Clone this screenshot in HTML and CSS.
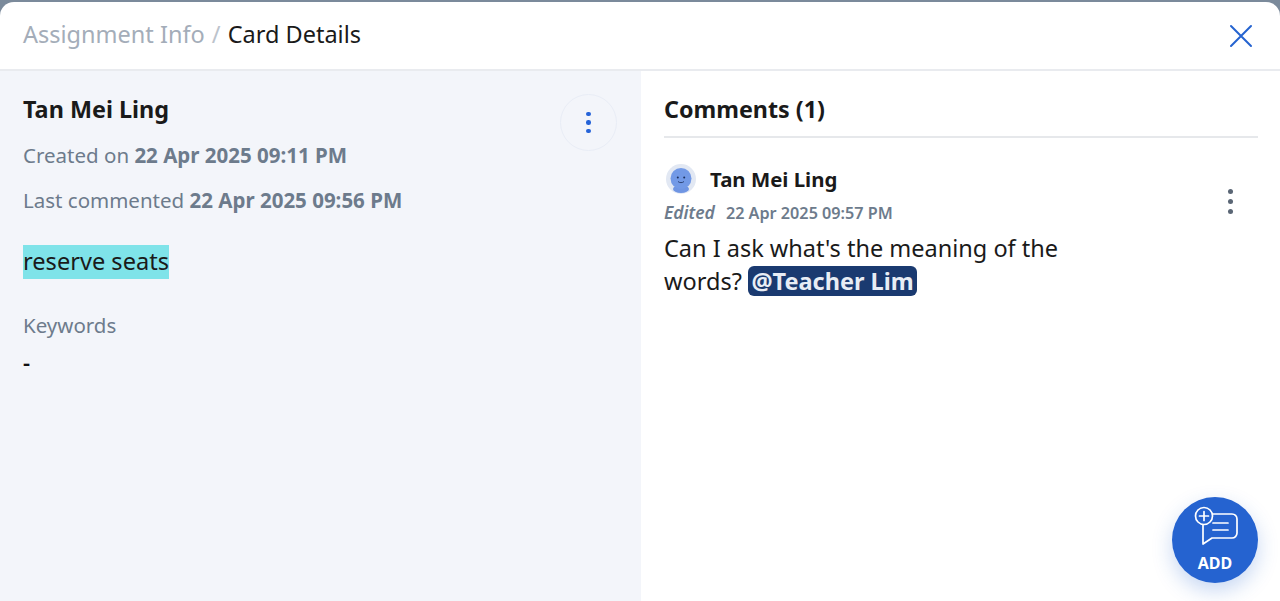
FILE: index.html
```html
<!DOCTYPE html>
<html lang="en">
<head>
    <meta charset="UTF-8">
    <meta name="viewport" content="width=device-width, initial-scale=1.0">
    <title>Card Details</title>
    <link rel="stylesheet" href="styles.css">
</head>
<body>
    <div class="modal">
        <header class="modal-header">
            <div class="crumbs">
                <span class="crumb-parent">Assignment Info</span>
                <span class="crumb-sep">/</span>
                <span class="crumb-current">Card Details</span>
            </div>
            <svg class="close-icon" width="24" height="24" viewBox="0 0 24 24" fill="none" stroke="#2563d0" stroke-width="2" stroke-linecap="round">
                <path d="M2 2L22 22M22 2L2 22"/>
            </svg>
        </header>
        <div class="modal-body">
            <section class="card-panel">
                <div class="card-top">
                    <div>
                        <h2 class="card-name">Tan Mei Ling</h2>
                        <p class="meta">Created on <b>22 Apr 2025 09:11 PM</b></p>
                        <p class="meta meta-last">Last commented <b>22 Apr 2025 09:56 PM</b></p>
                    </div>
                    <div class="round-menu">
                        <span class="dot"></span>
                        <span class="dot"></span>
                        <span class="dot"></span>
                    </div>
                </div>
                <div class="quote"><span class="highlight">reserve seats</span></div>
                <p class="keywords-label">Keywords</p>
                <p class="keywords-value">-</p>
            </section>
            <section class="comments-panel">
                <h2 class="comments-title">Comments (1)</h2>
                <div class="comment">
                    <div class="comment-main">
                        <div class="comment-user">
                            <svg class="avatar" width="30" height="30" viewBox="0 0 30 30">
                                <circle cx="15" cy="15" r="15" fill="#e2e8f3"/>
                                <ellipse cx="15" cy="25" rx="8" ry="4" fill="#6f95e3"/>
                                <circle cx="15" cy="14.500" r="10.500" fill="#7299e6"/>
                                <circle cx="11.800" cy="13.500" r="1" fill="#1c2f5c"/>
                                <circle cx="18.200" cy="13.500" r="1" fill="#1c2f5c"/>
                                <path d="M12 17.500C13.500 19 16.500 19 18 17.500" fill="none" stroke="#1c2f5c" stroke-width="0.800"/>
                            </svg>
                            <span class="user-name">Tan Mei Ling</span>
                        </div>
                        <div class="comment-meta"><i>Edited</i><b>22 Apr 2025 09:57 PM</b></div>
                        <p class="comment-text">Can I ask what's the meaning of the<br>words? <span class="mention">@Teacher Lim</span></p>
                    </div>
                    <div class="comment-menu">
                        <span class="dot dot-grey"></span>
                        <span class="dot dot-grey"></span>
                        <span class="dot dot-grey"></span>
                    </div>
                </div>
                <div class="add-btn">
                    <svg width="46" height="42" viewBox="-1 0 46 42" fill="none" stroke="#fff" stroke-width="1.700" stroke-linecap="round" stroke-linejoin="round">
                        <path d="M20 9H39A5 5 0 0 1 44 14V28A5 5 0 0 1 39 33H19L10 39V20"/>
                        <circle cx="11" cy="11" r="8.500"/>
                        <path d="M11 6.500V15.500M6.500 11H15.500"/>
                        <path d="M20 18H35M20 25H35"/>
                    </svg>
                    <span class="add-label">ADD</span>
                </div>
            </section>
        </div>
    </div>
</body>
</html>
```

FILE: styles.css
```css
* {
    box-sizing: border-box;
}
html, body {
    height: 100%;
}
body {
    margin: 0;
    padding-top: 2px;
    background: #7b8a9b;
    font-family: "Noto Sans", Arial, sans-serif;
    color: #1a1a1a;
    overflow: hidden;
}
p, h2 {
    margin: 0;
}
.modal {
    height: 599px;
    display: flex;
    flex-direction: column;
    background: #fff;
    border-radius: 14px 14px 0 0;
    overflow: hidden;
}
.modal-header {
    height: 69px;
    flex-shrink: 0;
    display: flex;
    justify-content: space-between;
    align-items: center;
    padding: 0 27px 0 23px;
    border-bottom: 2px solid #e9ebef;
}
.crumbs {
    font-size: 23.500px;
    margin-top: -4px;
}
.crumb-parent {
    color: #a4adb9;
}
.crumb-sep {
    color: #bcc3cc;
    margin: 0 1px;
}
.modal-body {
    flex: 1;
    display: flex;
    min-height: 0;
}
.card-panel {
    width: 641px;
    flex-shrink: 0;
    background: #f3f5fa;
    padding: 20px 24px 0 23px;
}
.card-top {
    display: flex;
    justify-content: space-between;
}
.card-name {
    font-size: 23.400px;
    font-weight: 700;
    line-height: 36px;
}
.meta {
    margin-top: 14px;
    font-size: 20.500px;
    line-height: 28px;
    color: #6d7b8c;
}
.meta-last {
    margin-top: 17px;
}
.meta b {
    font-weight: 700;
}
.round-menu {
    width: 57px;
    height: 57px;
    margin-top: 3px;
    border: 1.500px solid #e9edf6;
    border-radius: 50%;
    display: flex;
    flex-direction: column;
    justify-content: center;
    align-items: center;
    gap: 4.200px;
}
.dot {
    width: 4.500px;
    height: 4.500px;
    border-radius: 50%;
    background: #2563d8;
}
.dot-grey {
    background: #5a6675;
}
.quote {
    margin-top: 31px;
    font-size: 23.600px;
    line-height: 33px;
}
.highlight {
    display: inline-block;
    background: #7fe3e9;
    height: 34px;
}
.keywords-label {
    margin-top: 32px;
    font-size: 20.500px;
    line-height: 28px;
    color: #6d7b8c;
}
.keywords-value {
    margin-top: 9px;
    font-size: 22px;
    font-weight: 600;
    line-height: 28px;
    color: #111;
}
.comments-panel {
    flex: 1;
    position: relative;
    padding: 20px 22px 0 23px;
}
.comments-title {
    font-size: 23.300px;
    font-weight: 700;
    line-height: 36px;
    padding-bottom: 9px;
    border-bottom: 2px solid #e6e8eb;
}
.comment {
    display: flex;
    justify-content: space-between;
    margin-top: 26px;
}
.comment-main {
    width: 420px;
}
.comment-user {
    display: flex;
    align-items: center;
    gap: 14px;
    margin-left: 2px;
}
.user-name {
    font-size: 20.400px;
    font-weight: 700;
}
.comment-meta {
    margin-top: 6px;
    font-size: 16.200px;
    line-height: 24px;
    color: #6d7b8c;
    font-weight: 600;
}
.comment-meta i {
    margin-right: 11px;
    font-size: 17.500px;
}
.comment-meta b {
    font-weight: 600;
}
.comment-text {
    margin-top: 7px;
    font-size: 23.500px;
    line-height: 33px;
}
.mention {
    display: inline-block;
    line-height: 30px;
    background: #1a3a70;
    color: #e8edf5;
    font-weight: 700;
    border-radius: 6px;
    padding: 0 3.500px;
}
.comment-menu {
    display: flex;
    flex-direction: column;
    gap: 5px;
    margin: 25px 25px 0 0;
}
.comment-menu .dot {
    width: 5px;
    height: 5px;
}
.add-btn {
    position: absolute;
    right: 22px;
    bottom: 18px;
    width: 86px;
    height: 86px;
    border-radius: 50%;
    background: #2563d0;
    box-shadow: 0 8px 20px rgba(37, 99, 208, 0.25);
    display: flex;
    flex-direction: column;
    align-items: center;
    padding-top: 8px;
    color: #fff;
}
.add-label {
    font-size: 16px;
    font-weight: 700;
    line-height: 22px;
    margin-top: 5px;
}
```
